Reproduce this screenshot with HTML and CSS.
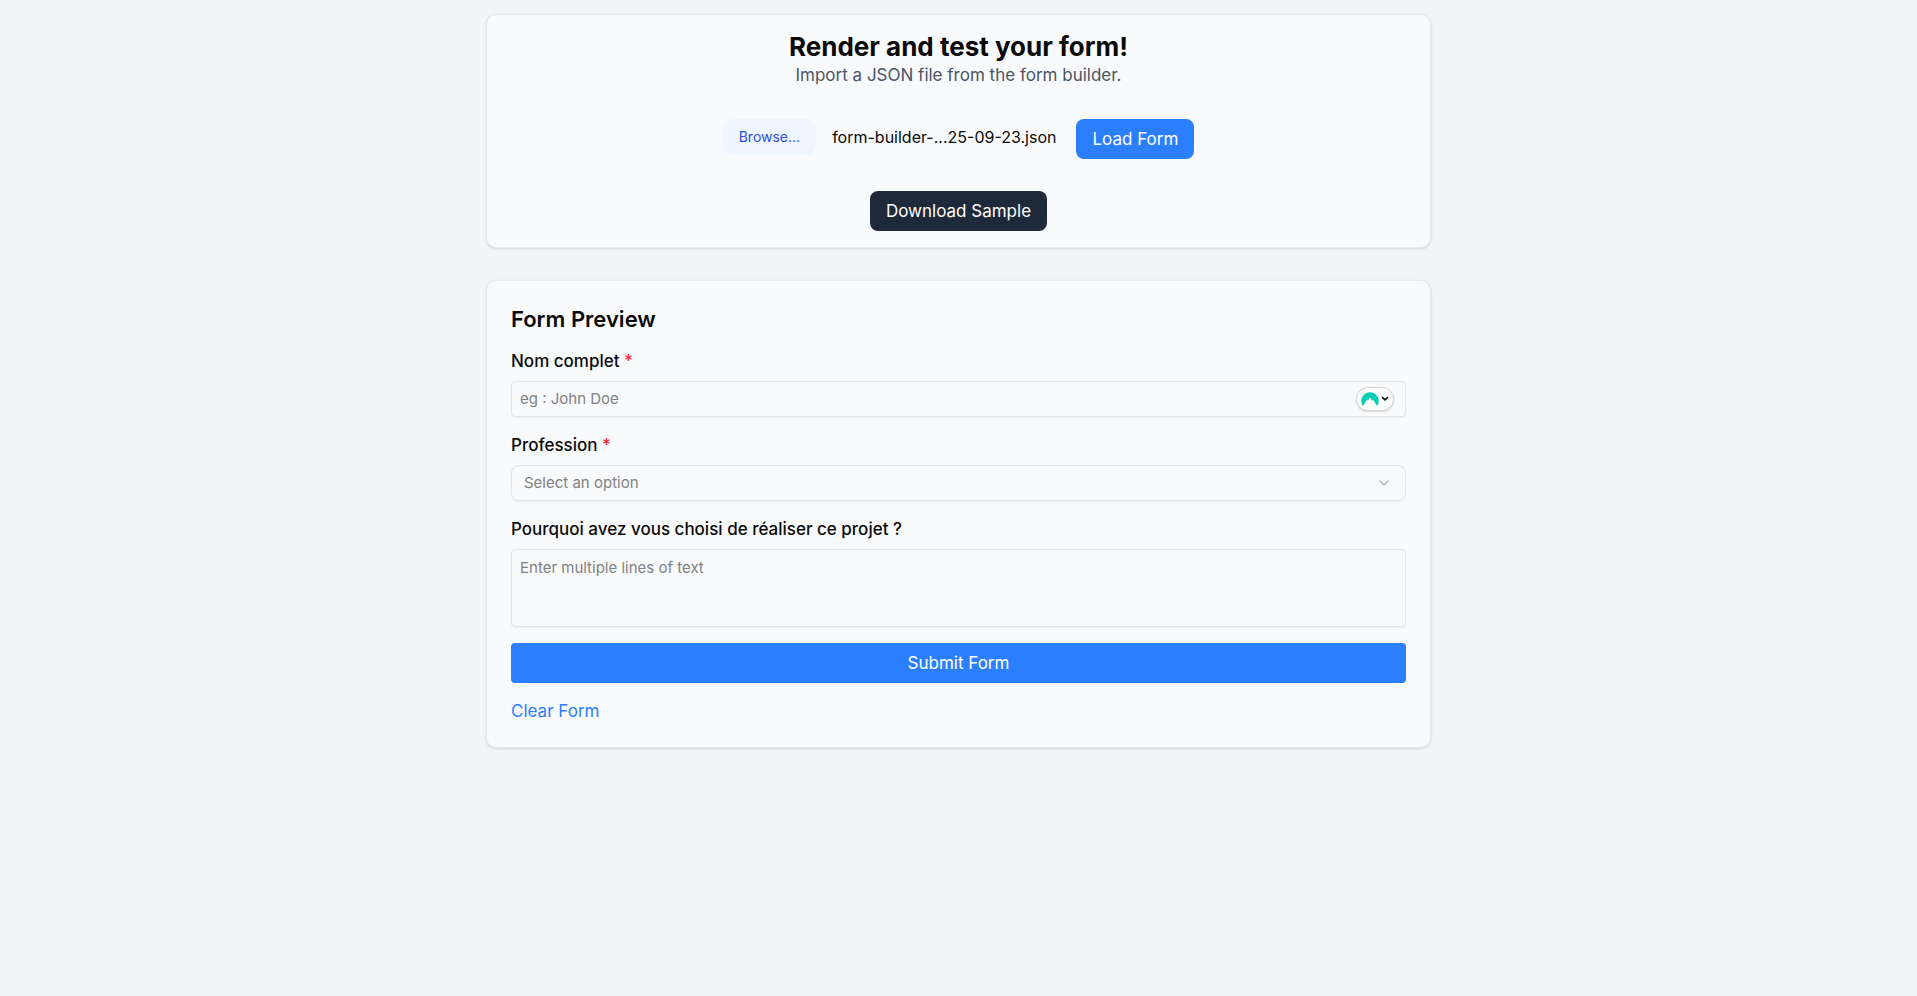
FILE: index.html
```html
<!DOCTYPE html>
<html lang="en">
<head>
<meta charset="utf-8">
<meta name="viewport" content="width=device-width, initial-scale=1">
<title>Form Renderer</title>
<link rel="stylesheet" href="styles.css">
</head>
<body>
<main class="page">
  <section class="card loader">
    <header class="loader-head">
      <h1 class="title">Render and test your form!</h1>
      <p class="subtitle">Import a JSON file from the form builder.</p>
    </header>
    <div class="file-row">
      <div class="file-picker">
        <input class="file-input" type="file" id="form-file" accept=".json">
        <label class="browse" for="form-file">Browse...</label>
        <span class="file-name">form-builder-...25-09-23.json</span>
      </div>
      <button class="btn btn-primary" type="button">Load Form</button>
    </div>
    <button class="btn btn-dark" type="button">Download Sample</button>
  </section>

  <section class="card preview">
    <h2 class="heading">Form Preview</h2>
    <form class="form">
      <div class="field">
        <label class="label" for="name">Nom complet <span class="required">*</span></label>
        <div class="input-wrap">
          <input class="control" type="text" id="name" placeholder="eg : John Doe">
          <button class="autofill" type="button" aria-label="Autofill">
            <svg class="autofill-logo" viewBox="0 0 18 14" aria-hidden="true"><path fill="#00cfb4" d="M2 14A8.7 8.7 0 1 1 16 14L12 7.6 11.2 8.9 9 5.2 6.8 8.9 6 7.6Z"/></svg>
            <svg class="autofill-arrow" viewBox="0 0 8 6" aria-hidden="true"><path d="M1.5 1.5 4 3.9 6.5 1.5" fill="none" stroke="#111" stroke-width="1.7" stroke-linecap="round" stroke-linejoin="round"/></svg>
          </button>
        </div>
      </div>
      <div class="field">
        <label class="label" for="job">Profession <span class="required">*</span></label>
        <div class="input-wrap">
          <select class="control select" id="job"><option>Select an option</option></select>
          <svg class="chevron" viewBox="0 0 16 16" aria-hidden="true"><path d="M4 6l4 4 4-4" fill="none" stroke="#b0b1b3" stroke-width="1.4" stroke-linecap="round" stroke-linejoin="round"/></svg>
        </div>
      </div>
      <div class="field">
        <label class="label" for="why">Pourquoi avez vous choisi de réaliser ce projet ?</label>
        <textarea class="control area" id="why" rows="3" placeholder="Enter multiple lines of text"></textarea>
      </div>
      <button class="btn btn-primary btn-submit" type="submit">Submit Form</button>
      <button class="clear" type="reset">Clear Form</button>
    </form>
  </section>
</main>
</body>
</html>
```

FILE: styles.css
```css
* {
  box-sizing: border-box;
  margin: 0;
}

body {
  background: #f3f4f6;
  color: #0a0a0a;
  font: 17px/24px Inter, "Liberation Sans", sans-serif;
}

button,
input,
select,
textarea {
  font: inherit;
  color: inherit;
}

.page {
  display: flex;
  flex-direction: column;
  gap: 32px;
  max-width: 945px;
  margin: 0 auto;
  padding: 14px 0;
}

.card {
  background: #f9fafc;
  border: 1px solid #e5e7e9;
  border-radius: 10px;
  box-shadow: 0 1px 3px rgba(0, 0, 0, 0.1), 0 1px 2px -1px rgba(0, 0, 0, 0.1);
}

.loader {
  display: flex;
  flex-direction: column;
  align-items: center;
  gap: 32px;
  padding: 16px;
}

.loader-head {
  text-align: center;
}

.title {
  font-size: 26px;
  line-height: 32px;
  font-weight: 700;
}

.subtitle {
  color: #4a5565;
}

.file-row {
  display: flex;
  align-items: flex-start;
  gap: 20px;
}

.file-picker {
  position: relative;
  display: flex;
  align-items: center;
  gap: 16px;
}

.file-input {
  position: absolute;
  inset: 0;
  width: 100%;
  opacity: 0;
}

.file-name {
  font-size: 16px;
}

.browse {
  padding: 8px 16px;
  border-radius: 10px;
  background: #eff6ff;
  color: #2b4fe6;
  font-size: 14px;
  line-height: 20px;
}

.btn {
  padding: 8px 16px;
  border: 0;
  border-radius: 8px;
  color: #fff;
}

.btn-primary {
  background: #2b7fff;
}

.btn-dark {
  background: #1e2939;
}

.btn-submit {
  border-radius: 4px;
}

.preview {
  display: flex;
  flex-direction: column;
  gap: 16px;
  padding: 24px;
}

.heading {
  font-size: 22px;
  line-height: 28px;
  font-weight: 600;
}

.form {
  display: flex;
  flex-direction: column;
  gap: 16px;
}

.field {
  display: flex;
  flex-direction: column;
  gap: 8px;
}

.label {
  font-weight: 500;
}

.required {
  color: #fb2c36;
}

.input-wrap {
  position: relative;
  display: flex;
}

.control {
  display: block;
  width: 100%;
  padding: 7px 8px;
  border: 1px solid #e3e4e6;
  border-radius: 4px;
  background: transparent;
  box-shadow: 0 1px 2px rgba(0, 0, 0, 0.05);
  font-size: 15px;
  line-height: 20px;
}

.control::placeholder {
  color: #808183;
  opacity: 1;
}

.select {
  appearance: none;
  padding: 7px 12px;
  border-radius: 8px;
  color: #808183;
}

.area {
  padding: 8px;
  resize: none;
}

.autofill {
  position: absolute;
  right: 12px;
  top: 6px;
  display: flex;
  align-items: center;
  justify-content: center;
  gap: 2px;
  width: 38px;
  height: 24px;
  padding: 0;
  border: 1px solid #d3d4d6;
  border-radius: 12px;
  background: #fff;
  box-shadow: 0 1px 2px rgba(0, 0, 0, 0.15);
}

.autofill-logo {
  flex: none;
  width: 18px;
  height: 14px;
}

.autofill-arrow {
  flex: none;
  width: 8px;
  height: 6px;
}

.chevron {
  position: absolute;
  right: 14px;
  top: 10px;
  width: 16px;
  height: 16px;
  pointer-events: none;
}

.clear {
  align-self: flex-start;
  padding: 0;
  border: 0;
  background: none;
  color: #2b7fff;
}
```
